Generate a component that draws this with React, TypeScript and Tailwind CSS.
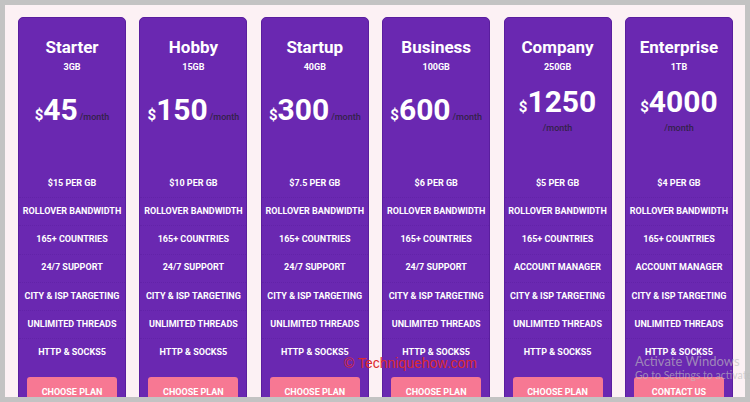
import React from "react";

type Plan = {
  name: string;
  gb: string;
  price: string;
  wrap: boolean;
  features: string[];
  cta: string;
};

const plans: Plan[] = [
  { name: "Starter", gb: "3GB", price: "45", wrap: false, features: ["$15 PER GB", "ROLLOVER BANDWIDTH", "165+ COUNTRIES", "24/7 SUPPORT", "CITY & ISP TARGETING", "UNLIMITED THREADS", "HTTP & SOCKS5"], cta: "CHOOSE PLAN" },
  { name: "Hobby", gb: "15GB", price: "150", wrap: false, features: ["$10 PER GB", "ROLLOVER BANDWIDTH", "165+ COUNTRIES", "24/7 SUPPORT", "CITY & ISP TARGETING", "UNLIMITED THREADS", "HTTP & SOCKS5"], cta: "CHOOSE PLAN" },
  { name: "Startup", gb: "40GB", price: "300", wrap: false, features: ["$7.5 PER GB", "ROLLOVER BANDWIDTH", "165+ COUNTRIES", "24/7 SUPPORT", "CITY & ISP TARGETING", "UNLIMITED THREADS", "HTTP & SOCKS5"], cta: "CHOOSE PLAN" },
  { name: "Business", gb: "100GB", price: "600", wrap: false, features: ["$6 PER GB", "ROLLOVER BANDWIDTH", "165+ COUNTRIES", "24/7 SUPPORT", "CITY & ISP TARGETING", "UNLIMITED THREADS", "HTTP & SOCKS5"], cta: "CHOOSE PLAN" },
  { name: "Company", gb: "250GB", price: "1250", wrap: true, features: ["$5 PER GB", "ROLLOVER BANDWIDTH", "165+ COUNTRIES", "ACCOUNT MANAGER", "CITY & ISP TARGETING", "UNLIMITED THREADS", "HTTP & SOCKS5"], cta: "CHOOSE PLAN" },
  { name: "Enterprise", gb: "1TB", price: "4000", wrap: true, features: ["$4 PER GB", "ROLLOVER BANDWIDTH", "165+ COUNTRIES", "ACCOUNT MANAGER", "CITY & ISP TARGETING", "UNLIMITED THREADS", "HTTP & SOCKS5"], cta: "CONTACT US" },
];

function Card({ p }: { p: Plan }) {
  return (
    <div className="w-[108px] shrink-0 flex flex-col bg-[#6a28b1] border border-[#5a1e9e] rounded-t-[5px] pt-[19px] text-white">
      <div className="text-[17px] leading-[20px] font-bold text-center">{p.name}</div>
      <div className="mt-[4px] text-[9px] leading-[12px] font-bold text-center">{p.gb}</div>
      <div className={`h-[97px] flex flex-col items-center ${p.wrap ? "pt-[11px]" : "pt-[19px]"}`}>
        <div className="flex items-baseline justify-center h-[36px]">
          <span className="text-[15px] leading-[36px] font-bold">$</span>
          <span className="text-[30px] leading-[36px] font-bold">{p.price}</span>
          {!p.wrap && (
            <span className="ml-[2px] text-[9px] leading-[36px] text-[#33224a] font-medium">/month</span>
          )}
        </div>
        {p.wrap && (
          <div className="mt-[3px] text-[9px] leading-[11px] text-[#33224a] font-medium">/month</div>
        )}
      </div>
      <div className="flex flex-col">
        {p.features.map((f, i) => (
          <div
            key={f}
            className={`h-[28.2px] flex items-center justify-center text-[9px] font-bold whitespace-nowrap ${i < p.features.length - 1 ? "border-b border-dotted border-[#6223a8]" : ""}`}
          >
            {f}
          </div>
        ))}
      </div>
      <div className="mt-[10px] mx-[8px] h-[30px] rounded-[3px] bg-[#f77893] flex items-center justify-center text-[9px] font-bold text-white">
        {p.cta}
      </div>
    </div>
  );
}

export default function App() {
  return (
    <div
      className="relative w-[750px] h-[402px] overflow-hidden bg-[#c3c3c3]"
      style={{ fontFamily: "Roboto, 'Noto Sans', sans-serif" }}
    >
      <div className="absolute left-[5px] top-[5px] w-[740px] h-[392px] overflow-hidden bg-[#fcf1f4]">
        <div className="flex gap-[13.4px] pl-[13px] pt-[12px]">
          {plans.map((p) => (
            <Card key={p.name} p={p} />
          ))}
        </div>
      </div>
      <div
        className="absolute left-[344px] top-[355px] text-[14px] leading-[16px] text-[#dc2a2e] whitespace-nowrap"
        style={{ fontFamily: "'Liberation Sans', sans-serif" }}
      >
        © Techniquehow.com
      </div>
      <div
        className="absolute left-[635px] top-[352px] text-[13px] leading-[18px] text-[rgba(190,190,190,0.65)] whitespace-nowrap"
        style={{ fontFamily: "Lato, sans-serif" }}
      >
        Activate Windows
      </div>
      <div
        className="absolute left-[635px] top-[369px] text-[10.5px] leading-[13px] text-[rgba(190,190,190,0.65)] whitespace-nowrap"
        style={{ fontFamily: "Lato, sans-serif" }}
      >
        Go to Settings to activate
      </div>
    </div>
  );
}
